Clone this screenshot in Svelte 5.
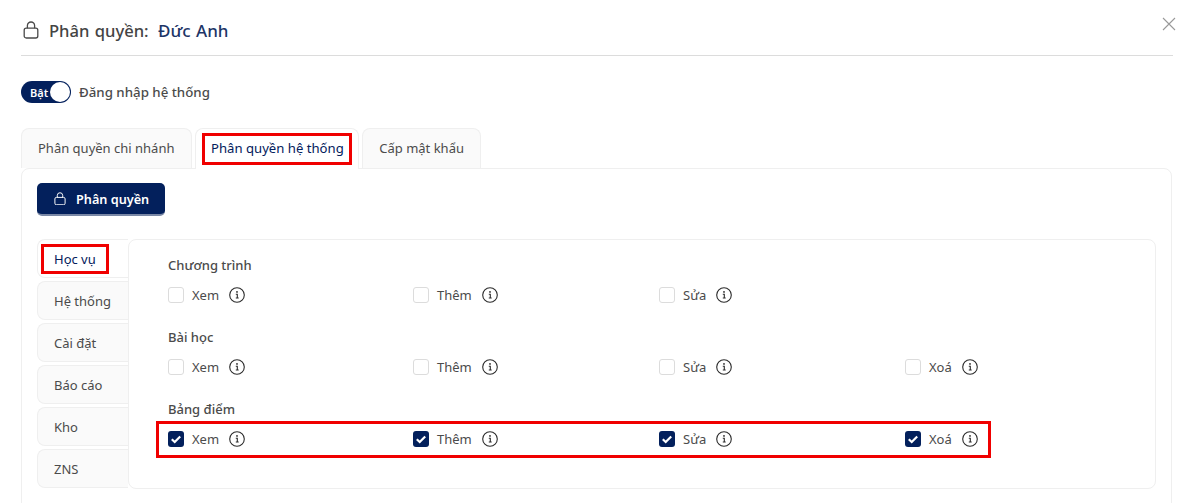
<script lang="ts">
  const tabs = ['Phân quyền chi nhánh', 'Phân quyền hệ thống', 'Cấp mật khẩu'];
  const sideTabs = ['Học vụ', 'Hệ thống', 'Cài đặt', 'Báo cáo', 'Kho', 'ZNS'];
  const groups = [
    { title: 'Chương trình', perms: ['Xem', 'Thêm', 'Sửa'], checked: false, marked: false },
    { title: 'Bài học', perms: ['Xem', 'Thêm', 'Sửa', 'Xoá'], checked: false, marked: false },
    { title: 'Bảng điểm', perms: ['Xem', 'Thêm', 'Sửa', 'Xoá'], checked: true, marked: true }
  ];
</script>

{#snippet lock(size: number)}
  <svg viewBox="0 0 16 18" width={size} height={size * 1.125} aria-hidden="true">
    <rect x="1.2" y="7.2" width="13.6" height="9.8" rx="2" fill="none" stroke="currentColor" stroke-width="1.3" />
    <path d="M4.4 7.2V4.6a3.6 3.6 0 0 1 7.2 0v2.6" fill="none" stroke="currentColor" stroke-width="1.3" />
  </svg>
{/snippet}

<div class="modal">
  <header class="head">
    <span class="head-lock">{@render lock(16)}</span>
    <h1>Phân quyền: <span class="name">Đức Anh</span></h1>
    <button class="close" aria-label="Đóng">
      <svg viewBox="0 0 14 14" width="14" height="14" aria-hidden="true">
        <path d="M1 1l12 12M13 1L1 13" fill="none" stroke="currentColor" stroke-width="1.1" />
      </svg>
    </button>
  </header>

  <div class="login">
    <span class="switch"><span class="switch-label">Bật</span><span class="knob"></span></span>
    <span>Đăng nhập hệ thống</span>
  </div>

  <div class="tabs">
    {#each tabs as tab, i}
      <div class="tab" class:active={i === 1}>
        <span class="tab-text">{tab}</span>
      </div>
    {/each}
  </div>

  <section class="panel">
    <button class="primary">
      {@render lock(12)}
      <span>Phân quyền</span>
    </button>

    <div class="perm-area">
      <div class="side">
        {#each sideTabs as tab, i}
          <div class="side-tab" class:active={i === 0}><span>{tab}</span></div>
        {/each}
      </div>

      <div class="content">
        {#each groups as group}
          <div class="group">
            <div class="group-title">{group.title}</div>
            <div class="perms" class:marked={group.marked}>
              {#each group.perms as perm}
                <label class="perm">
                  <span class="box" class:checked={group.checked}>
                    {#if group.checked}
                      <svg viewBox="0 0 16 16" width="16" height="16" aria-hidden="true">
                        <path d="M3.8 8.2l2.9 2.8 5.5-5.6" fill="none" stroke="#fff" stroke-width="2.2" />
                      </svg>
                    {/if}
                  </span>
                  <span class="perm-name">{perm}</span>
                  <svg class="info" viewBox="0 0 16 16" width="16" height="16" aria-hidden="true">
                    <circle cx="8" cy="8" r="7.3" fill="none" stroke="currentColor" stroke-width="1.1" />
                    <path d="M6.8 7.2h1.5v3.6M6.8 11h2.9" fill="none" stroke="currentColor" stroke-width="1.1" />
                    <circle cx="8" cy="4.9" r="0.9" fill="currentColor" />
                  </svg>
                </label>
              {/each}
            </div>
          </div>
        {/each}
      </div>
    </div>
  </section>
</div>

<style>
  :global(body) {
    margin: 0;
    background: #fff;
    overflow: hidden;
  }
  .modal {
    height: 503px;
    padding: 0 4px 0 21px;
    box-sizing: border-box;
    overflow: hidden;
    font-family: 'Noto Sans', 'Open Sans', sans-serif;
    font-size: 13px;
    color: #4b4b4b;
  }
  .head {
    display: flex;
    align-items: center;
    gap: 10px;
    height: 50px;
    padding: 5px 0 0 2px;
    border-bottom: 1px solid #dcdcdc;
  }
  .head-lock {
    display: flex;
    color: #4a4a4a;
  }
  h1 {
    margin: 0;
    font-size: 16.6px;
    font-weight: 500;
    color: #444;
    word-spacing: 1px;
  }
  .name {
    margin-left: 4px;
    font-size: 17px;
    color: #1d3567;
  }
  .close {
    margin: -13px -3px 0 auto;
    padding: 0;
    border: 0;
    background: none;
    color: #999;
    display: flex;
  }
  .login {
    display: flex;
    align-items: center;
    gap: 8px;
    height: 22px;
    margin-top: 25px;
    font-size: 13.3px;
    font-weight: 500;
  }
  .switch {
    display: flex;
    align-items: center;
    justify-content: space-between;
    box-sizing: border-box;
    width: 50px;
    height: 22px;
    padding: 0 1px 0 9px;
    border-radius: 11px;
    background: #03205c;
    color: #fff;
    font-size: 11px;
    font-weight: 600;
  }
  .knob {
    width: 20px;
    height: 20px;
    border-radius: 50%;
    background: #fff;
  }
  .tabs {
    display: flex;
    gap: 3px;
    margin-top: 25px;
    height: 40px;
  }
  .tab {
    display: flex;
    align-items: center;
    box-sizing: border-box;
    height: 40px;
    padding: 0 16.5px 2px;
    border: 1px solid #efefef;
    border-bottom: 0;
    border-radius: 8px 8px 0 0;
    background: #fafafa;
  }
  .tab:first-child {
    padding-left: 16px;
  }
  .tab.active {
    padding: 0 6px;
    background: #fff;
    position: relative;
    z-index: 1;
    height: 41px;
  }
  .tab-text {
    white-space: nowrap;
  }
  .tab.active .tab-text {
    padding: 2px 5px 4px 6px;
    border: 3px solid #f00000;
    color: #03205c;
    font-size: 13.15px;
    line-height: 20px;
  }
  .panel {
    box-sizing: border-box;
    width: 1151px;
    height: 345px;
    padding: 14px 15px 0;
    border: 1px solid #efefef;
    border-radius: 8px;
  }
  .primary {
    display: flex;
    align-items: center;
    gap: 10px;
    box-sizing: border-box;
    width: 128px;
    height: 33px;
    padding: 0 0 0 17px;
    border: 0;
    border-bottom: 2px solid #7a88a6;
    border-radius: 5px;
    background: #03205c;
    color: #fff;
    font: inherit;
    font-size: 12.7px;
    font-weight: 600;
  }
  .perm-area {
    display: flex;
    margin-top: 23px;
  }
  .side {
    display: flex;
    flex-direction: column;
    gap: 3px;
    width: 91px;
    flex: none;
  }
  .side-tab {
    display: flex;
    align-items: center;
    box-sizing: border-box;
    height: 39px;
    padding-left: 16px;
    border: 1px solid #efefef;
    border-right: 0;
    border-radius: 8px 0 0 8px;
    background: #fafafa;
  }
  .side-tab.active {
    padding-left: 3px;
    background: #fff;
    color: #03205c;
  }
  .side-tab.active span {
    padding: 2px 10px;
    border: 3px solid #f00000;
    line-height: 20px;
  }
  .content {
    box-sizing: border-box;
    width: 1029px;
    height: 250px;
    padding: 14px 0 0 39px;
    border: 1px solid #efefef;
    border-radius: 8px;
    background: #fff;
  }
  .group {
    height: 72px;
  }
  .group-title {
    height: 23px;
    line-height: 22px;
    font-weight: 500;
  }
  .perms {
    display: grid;
    grid-template-columns: 245px 246px 246px 246px;
    align-items: center;
    box-sizing: border-box;
    height: 37px;
    padding-bottom: 2px;
  }
  .perms.marked {
    width: 835px;
    margin: 0 0 0 -12px;
    padding-left: 9px;
    border: 3px solid #f00000;
  }
  .perm {
    display: flex;
    align-items: center;
  }
  .box {
    display: flex;
    box-sizing: border-box;
    width: 16px;
    height: 16px;
    border: 1px solid #dcdcdc;
    border-radius: 3px;
    background: #fff;
  }
  .box.checked {
    border: 0;
    background: #03205c;
  }
  .perm-name {
    margin-left: 8px;
  }
  .info {
    margin-left: 10px;
    color: #2b2b2b;
  }
</style>
